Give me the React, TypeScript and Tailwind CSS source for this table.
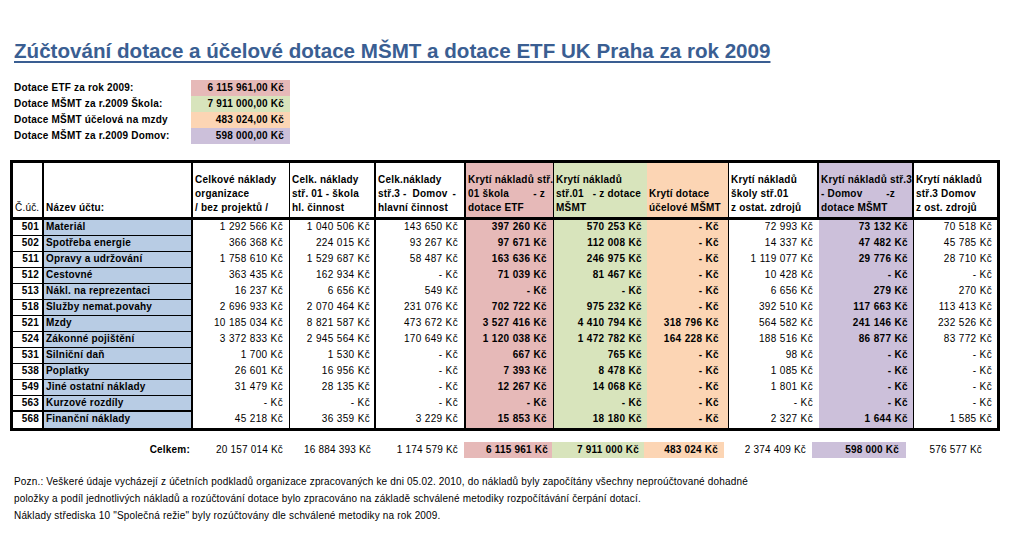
import React from "react";

const PINK = "bg-[#e6b9b8]";
const GREEN = "bg-[#d8e4bc]";
const PEACH = "bg-[#fcd5b4]";
const LAV = "bg-[#ccc0da]";

type Line = string | [string, string];

// header cells: class + lines
const head: { cls: string; lines: Line[]; bold?: boolean }[] = [
  { cls: "border-r-2 pl-0", lines: ["Č.úč."], bold: false },
  { cls: "border-r-2", lines: ["Název účtu:"] },
  { cls: "border-r", lines: ["Celkové náklady", "organizace", "/ bez projektů /"] },
  { cls: "border-r-2", lines: ["Celk. náklady", "stř. 01 - škola", "hl. činnost"] },
  { cls: "border-r-2", lines: ["Celk.náklady", ["stř.3 -  Domov", "-"], "hlavní činnost"] },
  { cls: "border-r " + PINK, lines: ["Krytí nákladů stř.", ["01 škola", "- z"], "dotace ETF"] },
  { cls: GREEN, lines: ["Krytí nákladů", "stř.01   - z dotace", "MŠMT"] },
  { cls: "border-r " + PEACH, lines: ["Krytí dotace", "účelové MŠMT"] },
  { cls: "border-r-2", lines: ["Krytí nákladů", "školy stř.01", "z ostat. zdrojů"] },
  { cls: "border-r-2 " + LAV, lines: ["Krytí nákladů stř.3", "- Domov        -z", "dotace MŠMT"] },
  { cls: "", lines: ["Krytí nákladů", "stř.3 Domov", "z ost. zdrojů"] },
];

// body column styles (from column 3 on)
const valCols = [
  "border-r pr-[6px]",
  "border-r-2 pr-[4px]",
  "border-r-2 pr-[6px]",
  "border-r pr-[6px] font-bold " + PINK,
  "pr-[5px] font-bold " + GREEN,
  "border-r pr-[9px] font-bold " + PEACH,
  "pr-[6px]",
  "border-r pr-[5px] font-bold " + LAV,
  "pr-[5px]",
];

const rows: [string, string, string[]][] = [
  ["501", "Materiál", ["1 292 566", "1 040 506", "143 650", "397 260", "570 253", "-", "72 993", "73 132", "70 518"]],
  ["502", "Spotřeba energie", ["366 368", "224 015", "93 267", "97 671", "112 008", "-", "14 337", "47 482", "45 785"]],
  ["511", "Opravy a udržování", ["1 758 610", "1 529 687", "58 487", "163 636", "246 975", "-", "1 119 077", "29 776", "28 710"]],
  ["512", "Cestovné", ["363 435", "162 934", "-", "71 039", "81 467", "-", "10 428", "-", "-"]],
  ["513", "Nákl. na reprezentaci", ["16 237", "6 656", "549", "-", "-", "-", "6 656", "279", "270"]],
  ["518", "Služby nemat.povahy", ["2 696 933", "2 070 464", "231 076", "702 722", "975 232", "-", "392 510", "117 663", "113 413"]],
  ["521", "Mzdy", ["10 185 034", "8 821 587", "473 672", "3 527 416", "4 410 794", "318 796", "564 582", "241 146", "232 526"]],
  ["524", "Zákonné pojištění", ["3 372 833", "2 945 564", "170 649", "1 120 038", "1 472 782", "164 228", "188 516", "86 877", "83 772"]],
  ["531", "Silniční daň", ["1 700", "1 530", "-", "667", "765", "-", "98", "-", "-"]],
  ["538", "Poplatky", ["26 601", "16 956", "-", "7 393", "8 478", "-", "1 085", "-", "-"]],
  ["549", "Jiné ostatní náklady", ["31 479", "28 135", "-", "12 267", "14 068", "-", "1 801", "-", "-"]],
  ["563", "Kurzové rozdíly", ["-", "-", "-", "-", "-", "-", "-", "-", "-"]],
  ["568", "Finanční náklady", ["45 218", "36 359", "3 229", "15 853", "18 180", "-", "2 327", "1 644", "1 585"]],
];

const summary: [string, string, string][] = [
  ["Dotace ETF za rok 2009:", "6 115 961,00 Kč", PINK],
  ["Dotace MŠMT za r.2009 Škola:", "7 911 000,00 Kč", GREEN],
  ["Dotace MŠMT účelová na mzdy", "483 024,00 Kč", PEACH],
  ["Dotace MŠMT za r.2009 Domov:", "598 000,00 Kč", LAV],
];

// totals row: [text, class]
const totals: [string, string][] = [
  ["Celkem:", "pr-[1px] font-bold"],
  ["20 157 014 Kč", "pr-[6px]"],
  ["16 884 393 Kč", "pr-[4px]"],
  ["1 174 579 Kč", "pr-[6px]"],
  ["6 115 961 Kč", "pr-[4px] font-bold " + PINK],
  ["7 911 000 Kč", "pr-[5px] font-bold " + GREEN],
  ["483 024 Kč", "pr-[6px] font-bold " + PEACH],
  ["2 374 409 Kč", "pr-[6px]"],
  ["598 000 Kč", "pr-[7px] font-bold " + LAV],
  ["576 577 Kč", "pr-[10px]"],
];

const kc = (v: string) => (v === "-" ? "- Kč" : v + " Kč");

export default function App() {
  return (
    <div className="w-[1033px] h-[550px] overflow-hidden bg-white text-black pl-[10px] font-['Liberation_Sans',Arial,sans-serif] text-[10px] tracking-[0.2px]">
      {/* title */}
      <h1 className="mt-[39px] ml-[4px] text-[20.6px] leading-[24px] font-bold tracking-normal text-[#3a5e92] underline decoration-2 underline-offset-[3px]">
        Zúčtování dotace a účelové dotace MŠMT a dotace ETF UK Praha za rok 2009
      </h1>

      {/* summary */}
      <div className="mt-[17px] grid grid-cols-[181px_99px] w-max font-bold leading-[16px]">
        {summary.map(([label, val, bg]) => (
          <React.Fragment key={label}>
            <div className="pl-[4px] h-[16px]">{label}</div>
            <div className={"h-[16px] text-right pr-[6px] " + bg}>{val}</div>
          </React.Fragment>
        ))}
      </div>

      {/* main table */}
      <div className="mt-[16px] w-[990px] border-[3px] border-black">
        <div className="grid grid-cols-[31px_149px_97px_86px_90px_88px_93px_82px_90px_95px_83px]">
          {head.map((h, i) => (
            <div
              key={i}
              className={
                "h-[57px] border-b-[3px] border-black flex flex-col justify-end pb-[2px] pl-[2px] leading-[14px] whitespace-pre " +
                (h.bold === false ? "font-normal " : "font-bold ") +
                h.cls
              }
            >
              {h.lines.map((l, j) =>
                typeof l === "string" ? (
                  <div key={j}>{l}</div>
                ) : (
                  <div key={j} className="flex justify-between pr-[8px]">
                    <span>{l[0]}</span>
                    <span>{l[1]}</span>
                  </div>
                )
              )}
            </div>
          ))}

          {rows.map(([no, name, vals], r) => {
            const last = r === rows.length - 1;
            const sep = last ? "" : r === rows.length - 2 ? "border-b-2" : "border-b";
            return (
              <React.Fragment key={no}>
                <div className={"h-[16px] leading-[13px] text-right pr-[3px] font-bold border-r-2 border-black " + sep}>
                  {no}
                </div>
                <div className={"h-[16px] leading-[13px] pl-[2px] font-bold bg-[#b8cce4] border-r-2 border-black " + sep}>
                  {name}
                </div>
                {vals.map((v, c) => (
                  <div key={c} className={"h-[16px] leading-[13px] text-right border-black whitespace-nowrap tracking-[0.35px] " + valCols[c]}>
                    {kc(v)}
                  </div>
                ))}
              </React.Fragment>
            );
          })}
        </div>
      </div>

      {/* totals */}
      <div className="mt-[11px] grid grid-cols-[181px_98px_86px_89px_88px_92px_80px_88px_94px_86px] leading-[16px]">
        {totals.map(([t, cls], i) => (
          <div key={i} className={"h-[16px] text-right whitespace-nowrap " + cls}>
            {t}
          </div>
        ))}
      </div>

      {/* notes */}
      <div className="mt-[15px] pl-[4px] leading-[17px] tracking-[0.17px]">
        <div>
          Pozn.: Veškeré údaje vycházejí z účetních podkladů organizace zpracovaných ke dni 05.02. 2010, do nákladů byly započítány všechny neproúčtované dohadné
        </div>
        <div>
          položky a podíl jednotlivých nákladů a rozúčtování dotace bylo zpracováno na základě schválené metodiky rozpočítávání čerpání dotací.
        </div>
        <div>Náklady střediska 10 "Společná režie" byly rozúčtovány dle schválené metodiky na rok 2009.</div>
      </div>
    </div>
  );
}
